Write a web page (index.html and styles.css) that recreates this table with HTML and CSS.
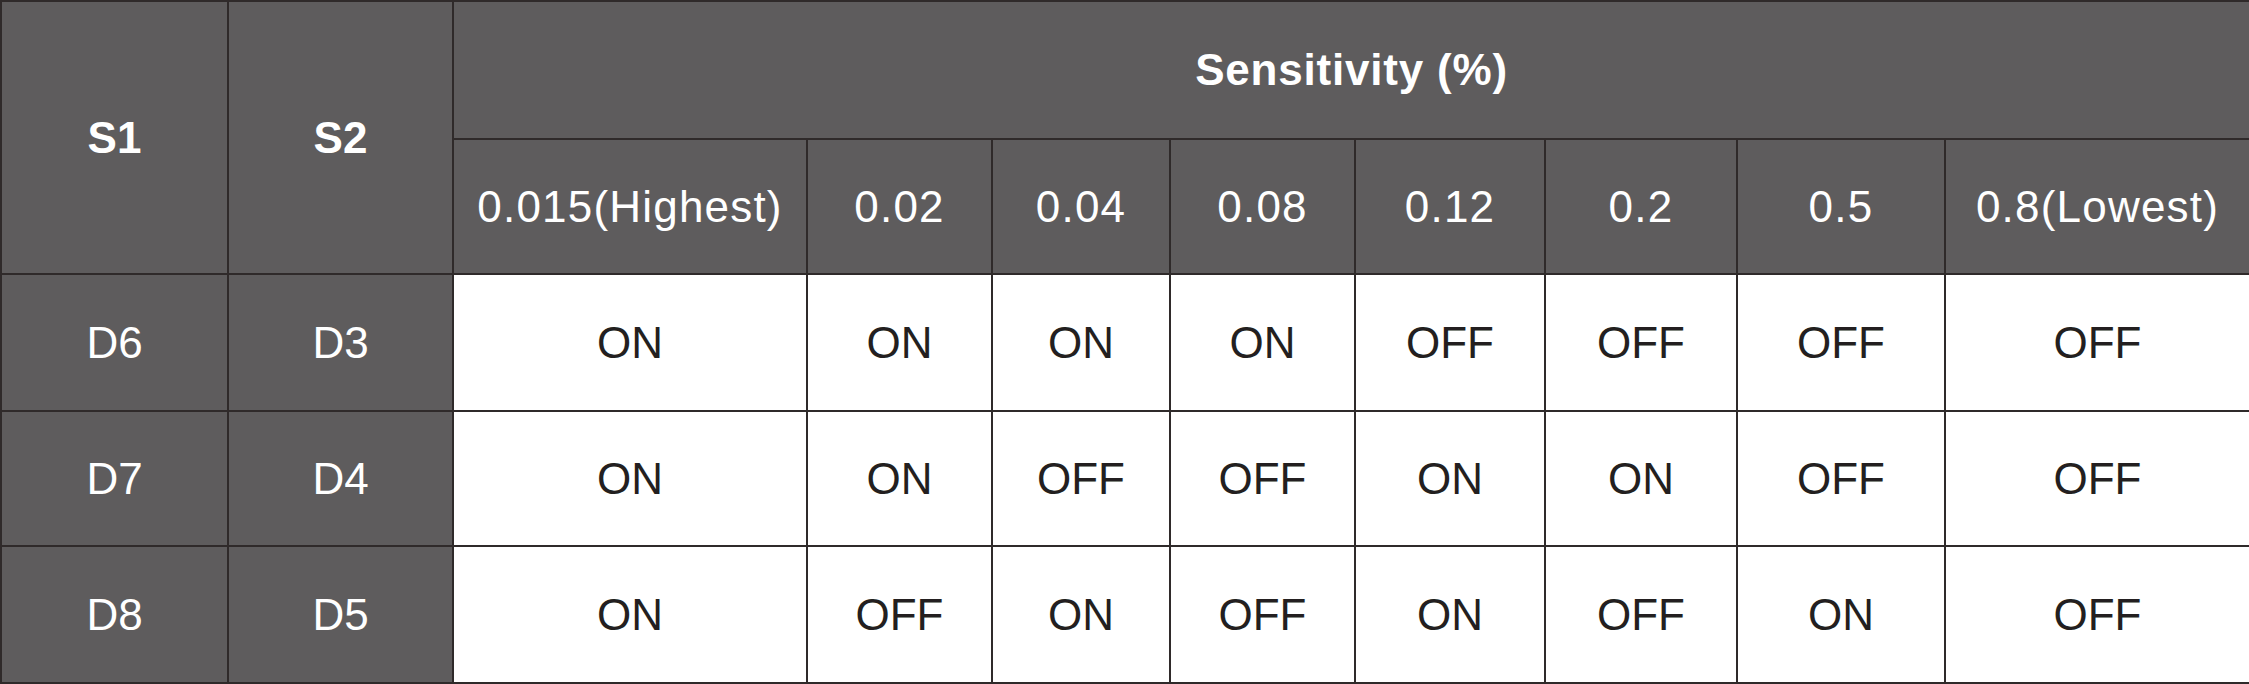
FILE: index.html
```html
<!DOCTYPE html>
<html lang="en">
<head>
<meta charset="utf-8">
<title>Sensitivity table</title>
<link rel="stylesheet" href="styles.css">
</head>
<body>
<table class="sens">
  <colgroup>
    <col class="c-s1"><col class="c-s2"><col class="c-a"><col class="c-b"><col class="c-c"><col class="c-d"><col class="c-e"><col class="c-f"><col class="c-g"><col class="c-h">
  </colgroup>
  <thead>
    <tr class="r-top">
      <th class="hd key" rowspan="2">S1</th>
      <th class="hd key" rowspan="2">S2</th>
      <th class="hd title" colspan="8">Sensitivity (%)</th>
    </tr>
    <tr class="r-sub">
      <th class="hd sub">0.015(Highest)</th>
      <th class="hd sub">0.02</th>
      <th class="hd sub">0.04</th>
      <th class="hd sub">0.08</th>
      <th class="hd sub">0.12</th>
      <th class="hd sub">0.2</th>
      <th class="hd sub">0.5</th>
      <th class="hd sub">0.8(Lowest)</th>
    </tr>
  </thead>
  <tbody>
    <tr class="r-1">
      <th class="hd row">D6</th><th class="hd row">D3</th>
      <td>ON</td><td>ON</td><td>ON</td><td>ON</td><td>OFF</td><td>OFF</td><td>OFF</td><td>OFF</td>
    </tr>
    <tr class="r-2">
      <th class="hd row">D7</th><th class="hd row">D4</th>
      <td>ON</td><td>ON</td><td>OFF</td><td>OFF</td><td>ON</td><td>ON</td><td>OFF</td><td>OFF</td>
    </tr>
    <tr class="r-3">
      <th class="hd row">D8</th><th class="hd row">D5</th>
      <td>ON</td><td>OFF</td><td>ON</td><td>OFF</td><td>ON</td><td>OFF</td><td>ON</td><td>OFF</td>
    </tr>
  </tbody>
</table>
</body>
</html>
```
FILE: styles.css
```css
html, body {
  margin: 0;
  padding: 0;
  background: #ffffff;
}

.sens {
  width: 2249px;
  table-layout: fixed;
  border-collapse: collapse;
  border: 2px solid #2f2a2a;
  font-family: "Liberation Sans", Arial, sans-serif;
  font-size: 44px;
  color: #231f20;
}

.c-s1 { width: 227px; }
.c-s2 { width: 225px; }
.c-a { width: 354px; }
.c-b { width: 185px; }
.c-c { width: 178px; }
.c-d { width: 185px; }
.c-e { width: 190px; }
.c-f { width: 192px; }
.c-g { width: 208px; }
.c-h { width: 305px; }

.r-top { height: 138px; }
.r-sub { height: 135px; }
.r-1 { height: 137px; }
.r-2 { height: 135px; }
.r-3 { height: 137px; }

.sens th,
.sens td {
  padding: 0;
  border: 2px solid #2f2a2a;
  text-align: center;
  vertical-align: middle;
  white-space: nowrap;
  line-height: 1;
}

.sens td {
  background: #ffffff;
  font-weight: normal;
}

.hd {
  background: #5e5c5d;
  color: #ffffff;
  font-weight: normal;
}

.hd.key,
.hd.title {
  font-weight: bold;
}

.hd.title {
  letter-spacing: 0.8px;
}

.hd.sub {
  letter-spacing: 1.2px;
}
```
